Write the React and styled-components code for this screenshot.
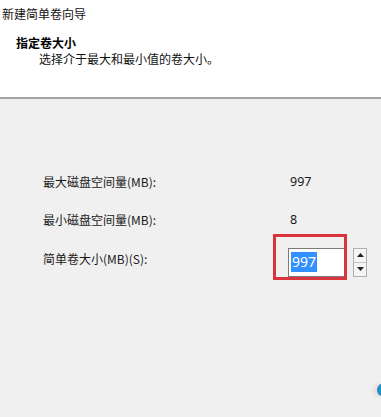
import React from "react";
import styled, { createGlobalStyle } from "styled-components";

const Global = createGlobalStyle`
  html, body { margin: 0; padding: 0; background: #f0f0f0; }
  body { font-family: "Noto Sans CJK SC", "Microsoft YaHei", sans-serif; font-size: 12px; color: #1a1a1a; }
`;

const Page = styled.div`
  width: 381px;
  height: 417px;
  overflow: hidden;
  position: relative;
  display: flex;
  flex-direction: column;
  background: #f0f0f0;
`;

const Header = styled.div`
  height: 99px;
  background: #ffffff;
  border-bottom: 2px solid #a3a3a3;
  box-sizing: border-box;
  display: flex;
  flex-direction: column;
  padding: 6px 0 0 2px;
`;

const WindowTitle = styled.div`
  font-size: 12px;
  line-height: 16px;
  color: #111;
`;

const StepTitle = styled.div`
  margin: 13px 0 0 14px;
  font-size: 12px;
  line-height: 16px;
  font-weight: 700;
  color: #000;
`;

const StepDesc = styled.div`
  margin: 0 0 0 37px;
  font-size: 12px;
  line-height: 16px;
  color: #111;
`;

const Body = styled.div`
  flex: 1;
  display: flex;
  flex-direction: column;
  padding: 64px 0 0 43px;
`;

const Row = styled.div`
  display: grid;
  grid-template-columns: 246px auto;
  align-items: center;
  height: ${(p) => p.$h}px;
`;

const Label = styled.div`
  font-size: 12px;
  line-height: 16px;
  color: #1a1a1a;
`;

const Value = styled.div`
  font-family: "Segoe UI", "Noto Sans", sans-serif;
  font-size: 12.5px;
  line-height: 16px;
  padding-left: 1px;
  color: #1a1a1a;
`;

const SpinWrap = styled.div`
  position: relative;
  display: flex;
  align-items: stretch;
  gap: 6px;
  margin: 6px 0 0 -1px;
`;

const Input = styled.div`
  width: 59px;
  height: 29px;
  box-sizing: border-box;
  border: 1px solid #7a7a7a;
  background: #fff;
  display: flex;
  align-items: center;
  padding-left: 2px;
`;

const Selected = styled.span`
  background: #3390ff;
  color: #fff;
  font-family: "Segoe UI", "Noto Sans", sans-serif;
  font-size: 14px;
  line-height: 20px;
  padding: 0 1px;
`;

const Spinner = styled.div`
  width: 14px;
  height: 29px;
  display: flex;
  flex-direction: column;
  border: 1px solid #b0b0b0;
  box-sizing: border-box;
`;

const SpinBtn = styled.div`
  flex: 1;
  display: flex;
  align-items: center;
  justify-content: center;
  background: #f4f4f4;
  border-top: ${(p) => (p.$bottom ? "1px solid #c8c8c8" : "none")};
`;

const Highlight = styled.div`
  position: absolute;
  left: -15px;
  top: -14px;
  width: 74px;
  height: 46px;
  border: 3px solid #d9343c;
  box-sizing: border-box;
  pointer-events: none;
`;

const Dot = styled.div`
  position: absolute;
  right: -6px;
  top: 384px;
  width: 10px;
  height: 12px;
  border-radius: 50%;
  background: #1e8fc8;
  box-shadow: -3px 0 4px rgba(240, 200, 210, 0.8);
`;

const Arrow = ({ down }) => (
  <svg width="7" height="4" viewBox="0 0 7 4">
    {down ? <path d="M0 0 H7 L3.5 4 Z" fill="#222" /> : <path d="M0 4 H7 L3.5 0 Z" fill="#222" />}
  </svg>
);

export default function App() {
  return (
    <>
      <Global />
      <Page>
        <Header>
          <WindowTitle>新建简单卷向导</WindowTitle>
          <StepTitle>指定卷大小</StepTitle>
          <StepDesc>选择介于最大和最小值的卷大小。</StepDesc>
        </Header>
        <Body>
          <Row $h={38}>
            <Label>最大磁盘空间量(MB):</Label>
            <Value>997</Value>
          </Row>
          <Row $h={38}>
            <Label>最小磁盘空间量(MB):</Label>
            <Value>8</Value>
          </Row>
          <Row $h={40}>
            <Label>简单卷大小(MB)(S):</Label>
            <SpinWrap>
              <Input>
                <Selected>997</Selected>
              </Input>
              <Spinner>
                <SpinBtn>
                  <Arrow />
                </SpinBtn>
                <SpinBtn $bottom>
                  <Arrow down />
                </SpinBtn>
              </Spinner>
              <Highlight />
            </SpinWrap>
          </Row>
        </Body>
        <Dot />
      </Page>
    </>
  );
}
